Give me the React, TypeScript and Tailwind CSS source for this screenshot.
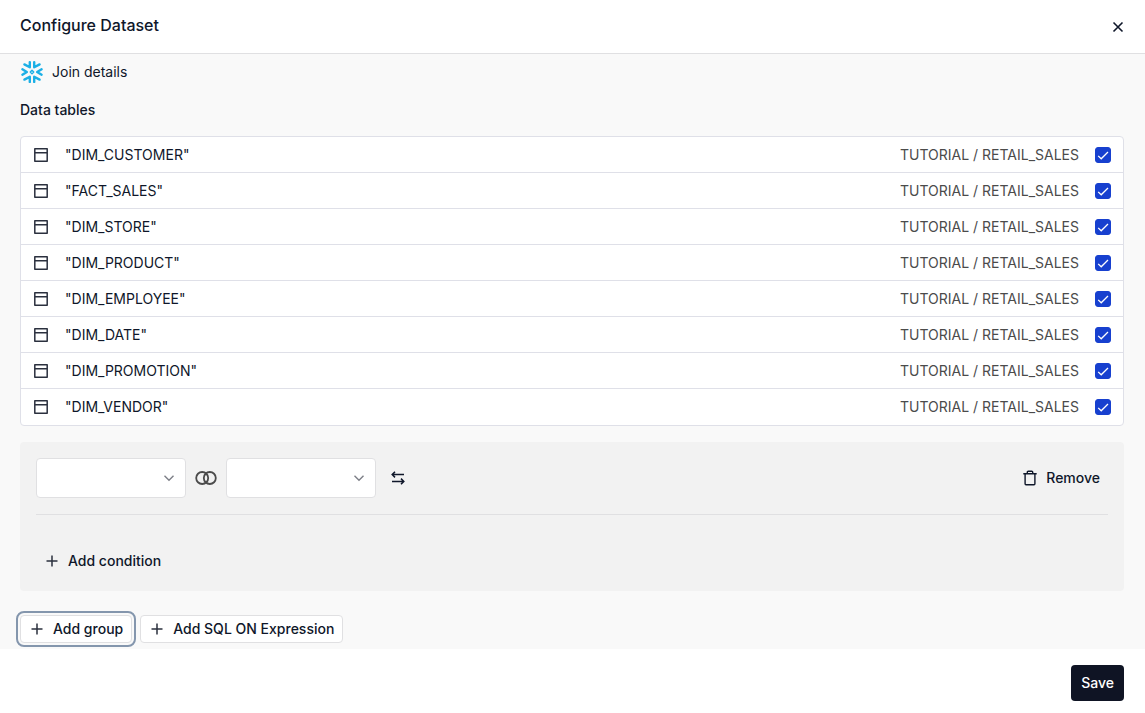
import React, { useState } from 'react';

const dataTables = [
  { name: '"DIM_CUSTOMER"', path: 'TUTORIAL / RETAIL_SALES' },
  { name: '"FACT_SALES"', path: 'TUTORIAL / RETAIL_SALES' },
  { name: '"DIM_STORE"', path: 'TUTORIAL / RETAIL_SALES' },
  { name: '"DIM_PRODUCT"', path: 'TUTORIAL / RETAIL_SALES' },
  { name: '"DIM_EMPLOYEE"', path: 'TUTORIAL / RETAIL_SALES' },
  { name: '"DIM_DATE"', path: 'TUTORIAL / RETAIL_SALES' },
  { name: '"DIM_PROMOTION"', path: 'TUTORIAL / RETAIL_SALES' },
  { name: '"DIM_VENDOR"', path: 'TUTORIAL / RETAIL_SALES' },
];

const SnowflakeIcon = () => (
  <svg width="24" height="24" viewBox="0 0 24 24" fill="none" stroke="#1cb0e6" strokeWidth="2.4" strokeLinecap="round" strokeLinejoin="round" aria-hidden="true">
    <path d="M9.8 2.1v5.2L4.4 4.4" />
    <path d="M14.2 2.1v5.2l5.4-2.9" />
    <path d="M9.8 21.9v-5.2l-5.4 2.9" />
    <path d="M14.2 21.9v-5.2l5.4 2.9" />
    <path d="M2.4 9.3 6.8 12l-4.4 2.7" />
    <path d="M21.6 9.3 17.2 12l4.4 2.7" />
    <path d="m12 10.3 1.7 1.7-1.7 1.7-1.7-1.7z" strokeWidth="1.5" />
  </svg>
);

const TableIcon = () => (
  <svg width="16" height="16" viewBox="0 0 16 16" fill="none" stroke="#2b303e" strokeWidth="1.5" strokeLinejoin="round" aria-hidden="true">
    <path d="M1.8 1.8h12.4v12.4H1.8zM1.8 5.8h12.4" />
  </svg>
);

const PlusIcon = () => (
  <svg width="16" height="16" viewBox="0 0 16 16" fill="none" stroke="#2b303e" strokeWidth="1.5" aria-hidden="true">
    <path d="M8 2.5v11M2.5 8h11" />
  </svg>
);

const JoinIcon = () => (
  <svg width="24" height="24" viewBox="0 0 24 24" fill="none" stroke="#4b4b4b" strokeWidth="1.8" aria-hidden="true">
    <circle cx="8.2" cy="12" r="6" />
    <circle cx="15.8" cy="12" r="6" />
  </svg>
);

const SwapIcon = () => (
  <svg width="16" height="16" viewBox="0 0 16 16" fill="none" stroke="#0f172a" strokeWidth="1.5" aria-hidden="true">
    <path d="M14 4.6H2.4M5 1.8 2.2 4.6 5 7.4M2 11.4h11.6M11 8.6l2.8 2.8-2.8 2.8" />
  </svg>
);

const TrashIcon = () => (
  <svg width="16" height="16" viewBox="0 0 16 16" fill="none" stroke="#0f172a" strokeWidth="1.4" strokeLinejoin="round" aria-hidden="true">
    <path d="M1.3 3.7h13.4M5.3 3.7V2.1c0-.5.4-.9.9-.9h3.6c.5 0 .9.4.9.9v1.6M3.1 3.7v10.1c0 .5.4.9.9.9h8c.5 0 .9-.4.9-.9V3.7" />
  </svg>
);

const CloseIcon = () => (
  <svg width="16" height="16" viewBox="0 0 16 16" fill="none" stroke="#0f172a" strokeWidth="1.6" aria-hidden="true">
    <path d="m3.5 3.5 9 9M12.5 3.5l-9 9" />
  </svg>
);

const TableSelect = ({ label }: { label: string }) => (
  <div className="relative">
    <select aria-label={label} className="block w-[150px] h-10 px-3 appearance-none bg-white border border-[#e0e0e2] rounded-sm">
      <option value=""></option>
      {dataTables.map((t) => (
        <option key={t.name} value={t.name}>{t.name}</option>
      ))}
    </select>
    <svg className="absolute right-[9px] top-3 pointer-events-none" width="16" height="16" viewBox="0 0 16 16" fill="none" stroke="#7d7f87" strokeWidth="1.4" aria-hidden="true">
      <path d="m3.5 5.8 4.5 4.5 4.5-4.5" />
    </svg>
  </div>
);

const App: React.FC = () => {
  const [selected, setSelected] = useState(dataTables.map(() => true));

  const toggle = (index: number) => {
    setSelected(selected.map((value, i) => (i === index ? !value : value)));
  };

  return (
    <div className="min-h-screen flex flex-col bg-white font-['Inter',sans-serif] text-sm text-[#0f172a]">
      {/* Header */}
      <header className="flex items-center justify-between pl-5 pr-[21px] pt-[13px] pb-4 border-b border-[#e0e0e2]">
        <h1 className="text-base leading-6 font-medium">Configure Dataset</h1>
        <button type="button" aria-label="Close" className="-mr-0.5 mt-1">
          <CloseIcon />
        </button>
      </header>

      <main className="flex-1 bg-[#f9f9f9] pl-5 pr-[21px] py-1.5">
        <div className="flex items-center gap-2 h-6">
          <SnowflakeIcon />
          <span>Join details</span>
        </div>

        <h2 className="mt-4 font-medium">Data tables</h2>
        <ul className="mt-4 bg-white border border-[#dfe0e8] rounded-sm">
          {dataTables.map((table, i) => (
            <li key={table.name} className="h-9 border-b border-[#dfe0e8] last:border-b-0">
              <label className="flex items-center h-full px-3">
                <TableIcon />
                <span className="ml-4 flex-1">{table.name}</span>
                <span className="mr-4 text-[#4b4b4b]">{table.path}</span>
                <span className="relative">
                  <input
                    type="checkbox"
                    checked={selected[i]}
                    onChange={() => toggle(i)}
                    className="block size-4 appearance-none rounded-[3px] border border-[#1740cf] checked:bg-[#1740cf]"
                  />
                  <svg className="absolute inset-0 pointer-events-none" width="16" height="16" viewBox="0 0 16 16" fill="none" stroke="#fff" strokeWidth="1.3" aria-hidden="true">
                    <path d="m3.2 8.9 3 2.9L13 5" />
                  </svg>
                </span>
              </label>
            </li>
          ))}
        </ul>

        {/* Join group */}
        <section className="mt-4 p-4 bg-[#f2f2f2] rounded-sm">
          <div className="flex items-center justify-between pb-4 border-b border-[#e0e0e2]">
            <div className="flex items-center gap-2">
              <TableSelect label="Left table" />
              <button type="button" aria-label="Join type">
                <JoinIcon />
              </button>
              <TableSelect label="Right table" />
              <button type="button" aria-label="Swap tables" className="ml-1.5">
                <SwapIcon />
              </button>
            </div>
            <button type="button" className="flex items-center gap-2 h-7 px-2 font-medium">
              <TrashIcon />
              Remove
            </button>
          </div>
          <button type="button" className="mt-8 flex items-center gap-2 h-7 px-2 font-medium">
            <PlusIcon />
            Add condition
          </button>
        </section>

        <div className="mt-6 flex gap-2">
          <button type="button" className="flex items-center gap-2 h-7 px-2 font-medium bg-white border border-[#e0e0e2] rounded-sm outline-2 outline-offset-2 outline-[#8496ad]">
            <PlusIcon />
            Add group
          </button>
          <button type="button" className="flex items-center gap-2 h-7 px-2 font-medium bg-white border border-[#e0e0e2] rounded-sm">
            <PlusIcon />
            Add SQL ON Expression
          </button>
        </div>
      </main>

      <footer className="flex justify-end pl-5 pr-[21px] pt-4 pb-3">
        <button type="button" className="h-9 px-2.5 font-medium text-white bg-[#0f1424] rounded-sm">
          Save
        </button>
      </footer>
    </div>
  );
};

export default App;
